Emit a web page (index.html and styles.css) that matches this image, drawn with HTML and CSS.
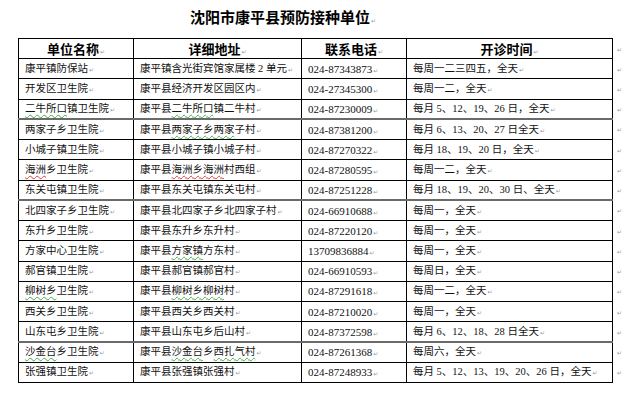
FILE: index.html
```html
<!DOCTYPE html>
<html lang="zh">
<head>
<meta charset="utf-8">
<link rel="stylesheet" href="styles.css">
</head>
<body>
<div class="page">
  <h1 class="title">沈阳市康平县预防接种单位<span class="pm">↵</span></h1>
  <table class="grid">
    <colgroup>
      <col class="c1"><col class="c2"><col class="c3"><col class="c4"><col class="c5">
    </colgroup>
    <thead>
      <tr>
        <th>单位名称<span class="pm">↵</span></th>
        <th>详细地址<span class="pm">↵</span></th>
        <th>联系电话<span class="pm">↵</span></th>
        <th>开诊时间<span class="pm">↵</span></th>
        <td class="end"><span class="pm">↵</span></td>
      </tr>
    </thead>
    <tbody>
      <tr><td>康平镇防保站<span class="pm">↵</span></td><td>康平镇含光街宾馆家属楼 2 单元<span class="pm">↵</span></td><td class="tel">024-87343873<span class="pm">↵</span></td><td>每周一二三四五，全天<span class="pm">↵</span></td><td class="end"><span class="pm">↵</span></td></tr>
      <tr><td>开发区卫生院<span class="pm">↵</span></td><td>康平县经济开发区园区内<span class="pm">↵</span></td><td class="tel">024-27345300<span class="pm">↵</span></td><td>每周一二，全天<span class="pm">↵</span></td><td class="end"><span class="pm">↵</span></td></tr>
      <tr><td><span class="sg">二牛所口</span>镇卫生院<span class="pm">↵</span></td><td>康平县<span class="sg">二牛所口</span>镇二牛村<span class="pm">↵</span></td><td class="tel">024-87230009<span class="pm">↵</span></td><td>每月 5、12、19、26 日，全天<span class="pm">↵</span></td><td class="end"><span class="pm">↵</span></td></tr>
      <tr class="thick"><td>两家子乡卫生院<span class="pm">↵</span></td><td>康平县<span class="sg">两家子乡两家</span>子村<span class="pm">↵</span></td><td class="tel">024-87381200<span class="pm">↵</span></td><td>每月 6、13、20、27 日全天<span class="pm">↵</span></td><td class="end"><span class="pm">↵</span></td></tr>
      <tr><td>小城子镇卫生院<span class="pm">↵</span></td><td>康平县小城子镇小城子村<span class="pm">↵</span></td><td class="tel">024-87270322<span class="pm">↵</span></td><td>每月 18、19、20 日，全天<span class="pm">↵</span></td><td class="end"><span class="pm">↵</span></td></tr>
      <tr><td><span class="sr">海洲</span>乡卫生院<span class="pm">↵</span></td><td>康平县<span class="sr">海洲乡海洲</span>村西组<span class="pm">↵</span></td><td class="tel">024-87280595<span class="pm">↵</span></td><td>每周一二，全天<span class="pm">↵</span></td><td class="end"><span class="pm">↵</span></td></tr>
      <tr><td>东关屯镇卫生院<span class="pm">↵</span></td><td>康平县东关屯镇东关屯村<span class="pm">↵</span></td><td class="tel">024-87251228<span class="pm">↵</span></td><td>每月 18、19、20、30 日、全天<span class="pm">↵</span></td><td class="end"><span class="pm">↵</span></td></tr>
      <tr class="thick"><td>北四家子乡卫生院<span class="pm">↵</span></td><td>康平县北四家子乡北四家子村<span class="pm">↵</span></td><td class="tel">024-66910688<span class="pm">↵</span></td><td>每周一，全天<span class="pm">↵</span></td><td class="end"><span class="pm">↵</span></td></tr>
      <tr><td>东升乡卫生院<span class="pm">↵</span></td><td>康平县东升乡东升村<span class="pm">↵</span></td><td class="tel">024-87220120<span class="pm">↵</span></td><td>每周一，全天<span class="pm">↵</span></td><td class="end"><span class="pm">↵</span></td></tr>
      <tr><td>方家中心卫生院<span class="pm">↵</span></td><td>康平县<span class="sg">方家镇</span>方东村<span class="pm">↵</span></td><td class="tel">13709836884<span class="pm">↵</span></td><td>每周一，全天<span class="pm">↵</span></td><td class="end"><span class="pm">↵</span></td></tr>
      <tr><td>郝官镇卫生院<span class="pm">↵</span></td><td>康平县郝官镇郝官村<span class="pm">↵</span></td><td class="tel">024-66910593<span class="pm">↵</span></td><td>每周日，全天<span class="pm">↵</span></td><td class="end"><span class="pm">↵</span></td></tr>
      <tr><td><span class="sg">柳树乡</span>卫生院<span class="pm">↵</span></td><td>康平县<span class="sg">柳树乡柳树</span>村<span class="pm">↵</span></td><td class="tel">024-87291618<span class="pm">↵</span></td><td>每周一二，全天<span class="pm">↵</span></td><td class="end"><span class="pm">↵</span></td></tr>
      <tr><td>西关乡卫生院<span class="pm">↵</span></td><td>康平县西关乡西关村<span class="pm">↵</span></td><td class="tel">024-87210020<span class="pm">↵</span></td><td>每周一，全天<span class="pm">↵</span></td><td class="end"><span class="pm">↵</span></td></tr>
      <tr><td>山东屯乡卫生院<span class="pm">↵</span></td><td>康平县山东屯乡后山村<span class="pm">↵</span></td><td class="tel">024-87372598<span class="pm">↵</span></td><td>每月 6、12、18、28 日全天<span class="pm">↵</span></td><td class="end"><span class="pm">↵</span></td></tr>
      <tr class="thick"><td><span class="sg">沙金台</span>乡卫生院<span class="pm">↵</span></td><td>康平县<span class="sg">沙金台</span>乡<span class="sg">西扎气村</span><span class="pm">↵</span></td><td class="tel">024-87261368<span class="pm">↵</span></td><td>每周六，全天<span class="pm">↵</span></td><td class="end"><span class="pm">↵</span></td></tr>
      <tr><td>张强镇卫生院<span class="pm">↵</span></td><td>康平县张强镇张强村<span class="pm">↵</span></td><td class="tel">024-87248933<span class="pm">↵</span></td><td>每月 5、12、13、19、20、26 日，全天<span class="pm">↵</span></td><td class="end"><span class="pm">↵</span></td></tr>
    </tbody>
  </table>
</div>
</body>
</html>
```

FILE: styles.css
```css
html, body {
  margin: 0;
  padding: 0;
  background: #ffffff;
}

.page {
  padding: 7px 0 0 18px;
  font-family: "Liberation Serif", "Noto Sans CJK SC", serif;
  color: #111111;
}

.title {
  margin: 0;
  padding-left: 172px;
  height: 31px;
  line-height: 20px;
  font-family: "Noto Sans CJK SC", sans-serif;
  font-size: 15px;
  font-weight: 700;
  color: #000000;
}

.pm {
  font-family: "DejaVu Sans", sans-serif;
  font-size: 6px;
  font-weight: 400;
  line-height: 1;
  color: #9a9a9a;
  margin-left: 1px;
}

.grid {
  border-collapse: collapse;
  table-layout: fixed;
  width: 614px;
}

.c1 { width: 115px; }
.c2 { width: 168px; }
.c3 { width: 105px; }
.c4 { width: 206px; }
.c5 { width: 20px; }

.grid tr {
  height: 20.25px;
}

.grid thead tr {
  height: 20px;
}

.grid th {
  padding: 0;
  border: 1px solid #000000;
  text-align: center;
  font-family: "Noto Sans CJK SC", sans-serif;
  font-size: 13px;
  font-weight: 700;
  line-height: 16px;
  color: #000000;
}

.grid td {
  padding: 0 0 0 6px;
  border: 1px solid #000000;
  font-size: 10.5px;
  line-height: 14px;
  white-space: nowrap;
  overflow: hidden;
}

.grid td.tel {
  font-size: 11px;
}

.grid td.end {
  border: none;
  padding-left: 3px;
}

.grid tr.thick td {
  border-top: 2px solid #6a6a6a;
}

.grid tr.thick td.end {
  border-top: none;
}

.sg {
  text-decoration: underline wavy #3fae49;
  text-decoration-thickness: 1px;
  text-underline-offset: 2px;
}

.sr {
  text-decoration: underline wavy #e23a3a;
  text-decoration-thickness: 1px;
  text-underline-offset: 2px;
}
```
